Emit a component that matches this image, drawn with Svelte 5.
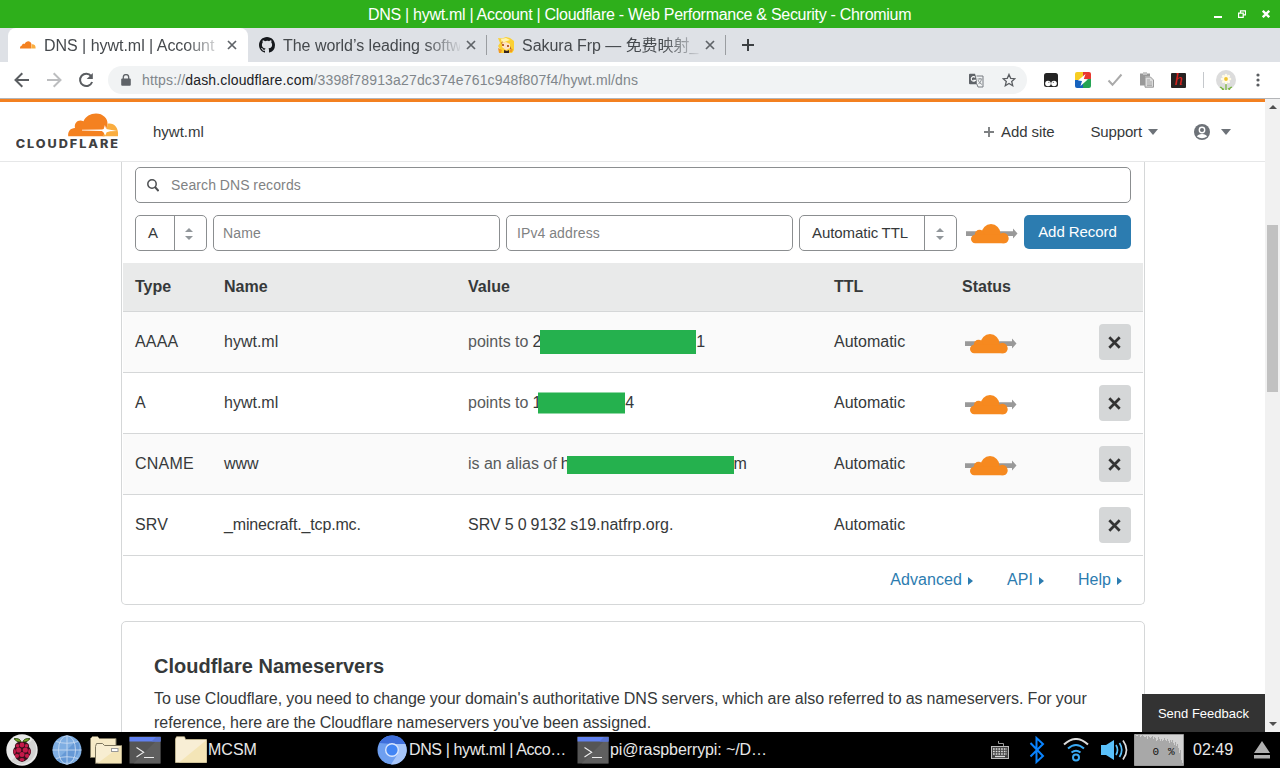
<script>
  const title = 'DNS | hywt.ml | Account | Cloudflare - Web Performance & Security - Chromium';
  const records = [
    { type: 'AAAA', name: 'hywt.ml', verb: 'points to', start: '2', end: '1', w: 156, h: 24, dy: 0, pull: -1, proxied: true },
    { type: 'A', name: 'hywt.ml', verb: 'points to', start: '1', end: '4', w: 87, h: 21, dy: -0.5, pull: -3, proxied: true },
    { type: 'CNAME', name: 'www', verb: 'is an alias of', start: 'h', end: 'm', w: 167, h: 18, dy: 1, pull: -3, proxied: true },
    { type: 'SRV', name: '_minecraft._tcp.mc.', full: 'SRV 5 0 9132 s19.natfrp.org.', proxied: false }
  ];
  const load = [31,29,29,30,30,28,29,30,29,28,28,29,26,29,28,27,28,29,26,28,27,24,25,28,26,24,26,24,25,27,25,24,26,24,22,25,23,25,22,20,23,19,21,17,12,15,5,2];
</script>

{#snippet proxyCloud()}
  <svg class="proxy" width="52" height="20" viewBox="0 0 52 20">
    <path d="M0 7.200h47V4.500l4.500 5-4.500 5V12H0z" fill="#999" />
    <g fill="#f6891f"><circle cx="25" cy="9.600" r="9.500" /><circle cx="13.500" cy="10.500" r="4.700" /><circle cx="37.300" cy="14" r="5.200" /><rect x="5" y="10.800" width="37.500" height="8.400" rx="4.200" /></g>
  </svg>
{/snippet}

{#snippet cross(size, color, weight)}
  <svg width={size} height={size} viewBox="0 0 10 10"><path d="M1 1l8 8M9 1L1 9" stroke={color} stroke-width={weight} fill="none" /></svg>
{/snippet}

{#snippet terminal()}
  <svg width="32" height="28" viewBox="0 0 32 28">
    <path d="M.5.5h31v27H.5z" fill="#555" />
    <path d="M31.5.5v27H4.5z" fill="#666" opacity=".6" />
    <path d="M.5 1h31v4.5H.5z" fill="#6181f0" /><path d="M27 1h4.5v4.5h-9z" fill="#5873d2" />
    <path d="M7.5 11.5l7.2 4.8-7.2 4.7M15 21.5h10" fill="none" stroke="#eee" stroke-width="1.1" />
  </svg>
{/snippet}

<div class="screen">
  <header class="titlebar">
    <span class="wtitle">{title}</span>
    <div class="controls">
      <svg width="8" height="8" viewBox="0 0 8 8"><path d="M0 6h8v2H0z" fill="#fff" /></svg>
      <svg width="8" height="8" viewBox="0 0 8 8"><path d="M2.500 2.500V.8h5v4H5.800M.6 3.200h4.600v4.200H.6z" fill="none" stroke="#fff" stroke-width="1.200" /></svg>
      <svg width="8" height="8" viewBox="0 0 8 8"><path d="M.8.8l6.400 6.400M7.200.8L.8 7.200" stroke="#fff" stroke-width="2.300" /></svg>
    </div>
  </header>

  <nav class="tabs">
    <div class="tab active">
      <svg width="16" height="8" viewBox="0 0 16 8"><path d="M0 7c0-1.8 1-2.500 2-2.600 0-1.500 1.600-2.200 2.600-1.400C6.300-.7 10.500-.5 11.500 3L11 7.500H0z" fill="#f48120" /><path d="M11.800 3.300C14 3 16 4.500 15.600 7.500h-4.500z" fill="#faad3f" /></svg>
      <span class="tlabel">DNS | hywt.ml | Account</span>
      {@render cross(10, '#5f6368', 1.7)}
    </div>
    <div class="tab">
      <svg width="16" height="16" viewBox="0 0 16 16"><path fill="#16191d" d="M8 0C3.58 0 0 3.58 0 8c0 3.54 2.29 6.53 5.47 7.59.4.07.55-.17.55-.38 0-.19-.01-.82-.01-1.49-2.01.37-2.53-.49-2.69-.94-.09-.23-.48-.94-.82-1.13-.28-.15-.68-.52-.01-.53.63-.01 1.08.58 1.23.82.72 1.21 1.87.87 2.33.66.07-.52.28-.87.51-1.07-1.78-.2-3.64-.89-3.64-3.95 0-.87.31-1.59.82-2.15-.08-.2-.36-1.02.08-2.12 0 0 .67-.21 2.2.82A7.6 7.6 0 0 1 8 3.86c.68 0 1.36.09 2 .27 1.53-1.04 2.2-.82 2.2-.82.44 1.1.16 1.92.08 2.12.51.56.82 1.27.82 2.15 0 3.07-1.87 3.75-3.65 3.95.29.25.54.73.54 1.48 0 1.07-.01 1.93-.01 2.2 0 .21.15.46.55.38A8.01 8.01 0 0 0 16 8c0-4.42-3.58-8-8-8z" /></svg>
      <span class="tlabel">The world’s leading softw</span>
      {@render cross(10, '#5f6368', 1.7)}
    </div>
    <i class="sep"></i>
    <div class="tab third">
      <svg width="16" height="16" viewBox="0 0 16 16"><path fill="#fbd034" d="M0 1l4 .5L8 0l4 1 4 3v9l-2 3H1l1-4-2-3 2-3z" /><path fill="#fff3b0" d="M3 2l5-1 4 2-3 1-5 2z" /><path fill="#fde3c4" d="M4 6l4-1 4 2v4l-4 2-4-3z" /><path fill="#b8622c" d="M4 7h2v2H4zM9 8h2v2H9zM5 4l-1 3-1-1zM12 9l2 4-2-1z" /><path fill="#35231f" d="M6 13l3 1 2-1v3H6z" /><path fill="#f29b20" d="M0 11l4 2-1 3H1zM12 13l3-1-1 3h-3z" /></svg>
      <span class="tlabel">Sakura Frp — 免费映射_</span>
      {@render cross(10, '#5f6368', 1.7)}
    </div>
    <i class="sep"></i>
    <svg class="plus" width="12" height="12" viewBox="0 0 12 12"><path d="M6 0v12M0 6h12" stroke="#3c4043" stroke-width="2" /></svg>
  </nav>

  <div class="toolbar">
    <svg class="b1" width="16" height="16" viewBox="0 0 16 16"><path d="M15 8H2M8.300 1.200L1.500 8l6.800 6.800" fill="none" stroke="#5a5d61" stroke-width="2" /></svg>
    <svg class="b2" width="16" height="16" viewBox="0 0 16 16"><path d="M1 8h13M7.700 1.200L14.500 8l-6.800 6.800" fill="none" stroke="#bcbdbf" stroke-width="2" /></svg>
    <svg class="b3" width="16" height="16" viewBox="0 0 16 16"><path d="M13.200 4.100A6.200 6.200 0 1 0 14.100 10" fill="none" stroke="#5a5d61" stroke-width="2" /><path d="M14.800 1v6H8.700z" fill="#5a5d61" /></svg>
    <div class="omnibox">
      <svg width="10" height="13" viewBox="0 0 10 13"><path d="M1.200 4.500h7.600q1 0 1 1v5.300q0 1-1 1H1.200q-1 0-1-1V5.500q0-1 1-1z" fill="#5f6368" /><path d="M2.300 5V3.300a2.700 2.700 0 0 1 5.400 0V5" fill="none" stroke="#5f6368" stroke-width="1.300" /></svg>
      <span class="url">https://<b>dash.cloudflare.com</b>/3398f78913a27dc374e761c948f807f4/hywt.ml/dns</span>
      <svg width="15" height="15" viewBox="0 0 15 15"><path d="M1 .8h5l3.500 10.500H1q-1 0-1-1V1.800q0-1 1-1z" fill="#5f6368" /><path d="M7.500 3H14v11H9l-1.200-3" fill="#f1f3f4" stroke="#777b80" /><path d="M6.200 4.300a2.300 2.300 0 1 0 .2 3H4.300" fill="none" stroke="#fff" stroke-width="1.100" /><path d="M8.500 6h4.800M11 5v1M9 7q1 3 4 4.500M12.500 6.500q-.8 3-3 4.500" fill="none" stroke="#777b80" stroke-width=".8" /></svg>
      <svg width="14" height="14" viewBox="0 0 14 14"><path d="M7 1.400l1.700 3.900 4.200.4-3.200 2.800 1 4.200L7 10.500l-3.700 2.200 1-4.200L1.100 5.700l4.200-.4z" fill="none" stroke="#5a5d61" stroke-width="1.300" /></svg>
    </div>
    <svg class="e1" width="14" height="14" viewBox="0 0 14 14"><rect width="14" height="14" rx="2.500" fill="#242424" /><circle cx="4" cy="10.500" r="2.800" fill="#fff" /><circle cx="10" cy="10.500" r="2.800" fill="#fff" /><circle cx="4.900" cy="9.300" r=".5" fill="#242424" /><circle cx="9.300" cy="9.300" r=".5" fill="#242424" /></svg>
    <svg class="e2" width="16" height="16" viewBox="0 0 16 16"><clipPath id="bolt-tile"><rect width="16" height="16" rx="2" /></clipPath><g clip-path="url(#bolt-tile)"><path d="M0 0h9v8H0z" fill="#f7cd22" /><path d="M8 0h8v8H8z" fill="#e9372f" /><path d="M0 8h8v8H0z" fill="#1763bd" /><path d="M8 7h8v9H8z" fill="#25a454" /></g><path d="M10.500 2L3 8.500l4 .5-1.500 5L13 7.300 8.800 7z" fill="#fff" /></svg>
    <svg class="e3" width="16" height="14" viewBox="0 0 16 14"><path d="M1.500 7.500l4 4.300L14.500 1.500" fill="none" stroke="#aaa" stroke-width="2" /></svg>
    <svg class="e4" width="15" height="16" viewBox="0 0 15 16"><path d="M0 1.500h3V.5h4v1h3v3H5v9H0z" fill="#999" /><path d="M3 1.500h4v1H3z" fill="#eee" /><path d="M5 5h5.500L13.500 8v7.200H5z" fill="#ddd" stroke="#999" /><path d="M7 8h3M7 10h5M7 12h5M7 13.600h5" stroke="#999" stroke-width=".8" /></svg>
    <span class="hext">h</span>
    <i class="tsep"></i>
    <svg class="avatar" width="20" height="20" viewBox="0 0 20 20"><circle cx="10" cy="10" r="10" fill="#dcdcdc" /><path d="M10 11v9M7 20l-2-3M13 20l2-3M4 17l4 2.500M16 17l-4 2" stroke="#79b43f" stroke-width="1.300" /><g stroke="#fffbe8" stroke-width="2.600" stroke-linecap="round"><path d="M10 5v8M6 9h8M7.200 6.200l5.600 5.600M12.800 6.200l-5.600 5.600" /></g><circle cx="10" cy="9" r="1.900" fill="#f0c330" /></svg>
    <svg class="dots" width="4" height="14" viewBox="0 0 4 14"><g fill="#5a5d61"><circle cx="2" cy="2" r="1.600" /><circle cx="2" cy="7" r="1.600" /><circle cx="2" cy="12" r="1.600" /></g></svg>
  </div>

  <div class="viewport">
    <main>
      <header class="site">
        <svg class="logo" width="104" height="38" viewBox="0 0 104 38">
          <path d="M52.200 24.200C51.700 19 54.500 16.300 59 16 57.800 10.500 62.500 6.800 67.500 9.200 69.500 4.500 74.500 1.600 80 1.600c7 0 12 5 11.500 10.600L88.500 24.200z" fill="#f48120" />
          <path d="M91.500 11.800C97.500 10.600 103 15 102 24.200H86.500L90.500 18z" fill="#faad3f" />
          <path d="M66 17.700l20-.2 1.700-.6 1.200-3.900 1.300 3.900 4 .9 7 1.200-7 .2-3.500 1-1.500 3.300-1.800-3.300-1.600-1.300L66 18.600z" fill="#fff" />
          <text transform="translate(-.3 35.700) scale(1.100 1)" textLength="93" lengthAdjust="spacing">CLOUDFLARE</text>
        </svg>
        <span class="domain">hywt.ml</span>
        <span class="add"><svg width="10" height="10" viewBox="0 0 10 10"><path d="M5 0v10M0 5h10" stroke="#7d8082" stroke-width="1.900" /></svg>Add site</span>
        <span class="support">Support<i class="caret"></i></span>
        <span class="user"><svg width="16" height="16" viewBox="0 0 16 16"><circle cx="8" cy="8" r="8" fill="#6d7278" /><circle cx="8" cy="6" r="3.400" fill="#fff" /><path d="M2.900 12.600Q4 9.900 8 9.900t5.100 2.700Q8 16 2.900 12.600z" fill="#fff" /><circle cx="8" cy="6" r="2" fill="#6d7278" /></svg><i class="caret"></i></span>
      </header>

      <div class="content">
        <section class="card records">
          <div class="search field">
            <svg width="12" height="13" viewBox="0 0 12 13"><circle cx="5" cy="5" r="4.200" fill="none" stroke="#4d4f52" stroke-width="1.500" /><path d="M8 8l3.600 4" stroke="#4d4f52" stroke-width="2" /></svg>
            <span>Search DNS records</span>
          </div>
          <div class="form">
            <div class="select type"><span>A</span><em><i></i><i></i></em></div>
            <div class="field name">Name</div>
            <div class="field ip">IPv4 address</div>
            <div class="select ttl"><span>Automatic TTL</span><em><i></i><i></i></em></div>
            <div class="pc">{@render proxyCloud()}</div>
            <button class="primary">Add Record</button>
          </div>
          <div class="table">
            <div class="row head"><span>Type</span><span>Name</span><span>Value</span><span>TTL</span><span>Status</span><span></span></div>
            {#each records as r}
              <div class="row">
                <span class="kind">{r.type}</span>
                <span class:tight={r.name.length > 10}>{r.name}</span>
                {#if r.full}
                  <span>{r.full}</span>
                {:else}
                  <span class="value"><small>{r.verb}</small>&nbsp;{r.start}<i class="mask" style="width:{r.w}px;height:{r.h}px;margin-left:{r.pull}px;transform:translateY({r.dy}px)"></i>{r.end}</span>
                {/if}
                <span>Automatic</span>
                <span class="status">{#if r.proxied}{@render proxyCloud()}{/if}</span>
                <button class="del" aria-label="Delete record">{@render cross(13, '#333', 2.1)}</button>
              </div>
            {/each}
          </div>
          <div class="links"><a href="#advanced">Advanced<i></i></a><a href="#api">API<i></i></a><a href="#help">Help<i></i></a></div>
        </section>

        <section class="card ns">
          <h2>Cloudflare Nameservers</h2>
          <p>To use Cloudflare, you need to change your domain's authoritative DNS servers, which are also referred to as nameservers. For your reference, here are the Cloudflare nameservers you've been assigned.</p>
        </section>
      </div>
    </main>
    <aside class="scroll"><i class="up"></i><i class="thumb"></i><i class="down"></i></aside>
    <button class="feedback">Send Feedback</button>
  </div>

  <footer class="taskbar">
    <svg class="k1" width="32" height="32" viewBox="0 0 32 32">
      <circle cx="16" cy="16" r="15.700" fill="#e9e9e9" /><path d="M27 5a15.700 15.700 0 0 1-22 22z" fill="#d3d3d3" />
      <path d="M15.500 8.500Q10 8 8 4.700q6-1 7.500 3.800zM16.500 8.500Q22 8 24 4.700q-6-1-7.500 3.800z" fill="#75a928" stroke="#29440e" stroke-width=".9" />
      <path d="M16 8q4-1 6.500 2 1 2 .5 3 3 3 1.500 7-2 3-3 5-2.500 2.500-5.500 3-3-.5-5.500-3-1-2-3-5Q6 16 9 13q-.5-1 .5-3Q12 7 16 8z" fill="#37101b" />
      <g fill="#c51a4a"><circle cx="16" cy="11" r="2.400" /><circle cx="11.500" cy="11.800" r="1.800" /><circle cx="20.500" cy="11.800" r="1.800" /><circle cx="12.700" cy="16" r="2.600" /><circle cx="19.300" cy="16" r="2.600" /><ellipse cx="8.700" cy="17.500" rx="1.200" ry="2.600" /><ellipse cx="23.300" cy="17.500" rx="1.200" ry="2.600" /><circle cx="16" cy="20.600" r="2.500" /><circle cx="11" cy="21.800" r="2.100" /><circle cx="21" cy="21.800" r="2.100" /><ellipse cx="16" cy="25.600" rx="2.500" ry="1.600" /></g>
    </svg>
    <svg class="k2" width="30" height="30" viewBox="0 0 30 30"><circle cx="15" cy="15" r="14.500" fill="#7faee2" /><path d="M25 5a14.500 14.500 0 0 1-20 20z" fill="#6699d6" /><g fill="none" stroke="#c5d9f2" stroke-width=".9"><ellipse cx="15" cy="15" rx="8.500" ry="14.300" /><path d="M15 .5v29M.5 15h29M4 6.500q11 3.500 22 0M4 23.500q11-3.500 22 0" /></g></svg>
    <svg class="k3" width="32" height="28" viewBox="0 0 32 28"><path d="M.5 21.500V2.500l2-2h5l2 2H26v19z" fill="#f6eac7" stroke="#7d765f" /><path d="M5.500 27.300V10.500l1-3h6l2 2h17v17.800z" fill="#f8eed2" stroke="#7d765f" /><path d="M31.500 9.500v17.800h-24z" fill="#f3e4b6" /><rect x="21.500" y="12.500" width="6.500" height="3" fill="#fff" stroke="#999" /></svg>
    <span class="k4">{@render terminal()}</span>
    <svg class="k5" width="32" height="28" viewBox="0 0 32 28"><path d="M.5 26.500V3l1-2.200h8l1 2.700h21v23z" fill="#f8eed5" /><path d="M31.500 4v22.500H4z" fill="#f4e5b7" /><path d="M.5 26.500V3l1-2.200h8l1 2.700h21v23z" fill="none" stroke="#dacb9e" stroke-width=".7" /></svg>
    <span class="t1">MCSM</span>
    <svg class="k6" width="30" height="30" viewBox="0 0 30 30"><circle cx="15" cy="15" r="14.500" fill="#6e9ff0" /><path d="M2.500 8A14.500 14.500 0 0 1 28.500 9H15z" fill="#3f6fdc" /><path d="M28.500 9A14.500 14.500 0 0 1 14 29.500L21 18.500Q23 13 15 9z" fill="#a6c5fa" /><circle cx="15" cy="15" r="7" fill="#dbe7fd" /><circle cx="15" cy="15" r="5.600" fill="#4285f4" /></svg>
    <span class="t2">DNS | hywt.ml | Acco…</span>
    <span class="k7">{@render terminal()}</span>
    <span class="t3">pi@raspberrypi: ~/D…</span>
    <svg class="r1" width="18" height="18" viewBox="0 0 18 18"><path d="M12.500 5V2.500h-5V0" fill="none" stroke="#999" /><rect x=".5" y="5.500" width="17" height="12" fill="#444" stroke="#bbb" /><path d="M2 8h14M2 10.500h14M2 13h14" stroke="#ddd" stroke-width="1.400" stroke-dasharray="1.700 1" /><path d="M4 15.500h10" stroke="#ddd" stroke-width="1.300" /></svg>
    <svg class="r2" width="16" height="28" viewBox="0 0 16 28"><path d="M1.500 7l12.500 13-6.500 6V2L14 8 1.500 20.500" fill="none" stroke="#0a84ff" stroke-width="2" /></svg>
    <svg class="r3" width="26" height="24" viewBox="0 0 26 24"><g fill="none" stroke-width="2"><path d="M1 6.500Q13-4.500 25 6.500" stroke="#ddd" /><path d="M5 10.500q8-7 16 0M8.500 14.500q4.500-3.500 9 0" stroke="#3aaaf4" /><circle cx="13" cy="19.500" r="3" stroke="#3aaaf4" /></g></svg>
    <svg class="r4" width="27" height="22" viewBox="0 0 27 22"><path d="M0 6h5l8-5v20l-8-5H0z" fill="#5ac1fa" /><g fill="none" stroke-width="1.700"><path d="M15 6q3 5 0 10M18.500 4q4.500 7 0 14" stroke="#5ac1fa" /><path d="M22 1.500q7 9.500 0 19" stroke="#ddd" /></g></svg>
    <svg class="r5" width="50" height="32" viewBox="0 0 50 32"><path d="M.5.500h49v31H.5z" fill="#d3d3d3" stroke="#9a9a9a" />{#each load as v, i}<rect x={i + 1} y={31 - v} width="1.050" height={v} fill="#a8a8a8" />{/each}<text x="18.500" y="21" textLength="22" xml:space="preserve">0 %</text></svg>
    <time>02:49</time>
    <svg class="r6" width="16" height="18" viewBox="0 0 16 18"><path d="M8 0l8 12H0zM0 14h16v3.500H0z" fill="#b0b0b0" /></svg>
  </footer>
</div>

<style>
  :global(body) { margin: 0; overflow: hidden; }
  * { box-sizing: border-box; }
  .screen { width: 1280px; height: 768px; display: flex; flex-direction: column; background: #fff; font-family: "Liberation Sans", "Noto Sans CJK SC", sans-serif; font-size: 16px; color: #36393a; overflow: hidden; }
  svg { display: block; flex: none; }
  button { border: 0; padding: 0; font: inherit; }
  span { white-space: nowrap; }
  .titlebar { height: 28px; flex: none; background: #2eaf1b; color: #fff; display: flex; align-items: center; padding-left: 368px; padding-top: 1px; }
  .wtitle { width: 550px; letter-spacing: -.29px; }
  .controls { margin: 0 10px 1px auto; display: flex; gap: 16px; }
  .tabs { height: 34px; flex: none; background: #dee1e6; display: flex; align-items: center; padding-left: 8px; color: #45494d; }
  .tab { width: 238px; height: 34px; display: flex; align-items: center; padding: 0 10px 0 11px; }
  .tab > :global(svg:last-child) { margin-left: 6px; }
  .active { width: 240px; background: #fff; border-radius: 8px 8px 0 0; padding-left: 12px; padding-right: 11px; }
  .tlabel { flex: 1; height: 24px; line-height: 26px; margin-left: 8px; overflow: hidden; letter-spacing: -.03px; mask-image: linear-gradient(90deg, #000 calc(100% - 36px), transparent calc(100% + 4px)); }
  .sep { width: 1px; height: 20px; background: #9a9da1; }
  .plus { margin-left: 16px; }
  .toolbar { height: 37px; flex: none; background: #fff; border-bottom: 1px solid #b3b5b8; display: flex; align-items: center; padding: 0 0 0 14px; }
  .b2 { margin-left: 16px; }
  .b3 { margin-left: 16px; }
  .omnibox { width: 919px; height: 28px; margin-left: 14px; border-radius: 14px; background: #f1f3f4; display: flex; align-items: center; padding: 0 11px 0 13px; }
  .url { flex: 1; margin-left: 11px; font-size: 14px; letter-spacing: .155px; color: #80868b; }
  .url b { font-weight: 400; color: #202124; }
  .omnibox > svg:last-child { margin-left: 18px; }
  .e1 { margin-left: 17px; }
  .e2 { margin-left: 17px; }
  .e3 { margin-left: 16px; }
  .e4 { margin-left: 17px; }
  .hext { width: 15px; height: 15px; margin-left: 16px; background: #252222; color: #e0201c; font: italic 17px/14px "Liberation Serif", serif; text-align: center; border-radius: 1px; }
  .tsep { width: 1px; height: 16px; margin-left: 17px; background: #c5c8cc; }
  .avatar { margin-left: 12px; }
  .dots { margin-left: 20px; }

  .viewport { flex: 1; min-height: 0; position: relative; display: flex; }
  main { width: 1265px; display: flex; flex-direction: column; overflow: hidden; border-top: 3px solid #f38020; }
  .site { height: 60px; flex: none; border-bottom: 1px solid #e6e7e8; display: flex; align-items: center; padding-left: 16px; font-size: 15px; }
  .logo { margin-top: -1px; }
  .logo text { font: 800 11.500px Inter, sans-serif; fill: #404041; }
  .domain { margin-left: 33px; }
  .add { margin-left: auto; display: flex; align-items: center; gap: 7px; letter-spacing: -.1px; }
  .support { margin-left: 36px; display: flex; align-items: center; gap: 6px; letter-spacing: -.15px; }
  .user { margin-left: 36px; margin-right: 34px; display: flex; align-items: center; gap: 11px; }
  .caret { border: 5.500px solid transparent; border-top: 6px solid #6d7278; border-bottom: 0; }
  .content { width: 1024px; margin-left: 121px; flex: 1; min-height: 0; word-spacing: -.38px; }
  .card { border: 1px solid #d5d7d8; border-radius: 5px; background: #fff; }
  .records { height: 443px; border-top: 0; border-radius: 0 0 5px 5px; padding: 5px 1px 0; }
  .field { height: 36px; border: 1px solid #8b8e90; border-radius: 5px; display: flex; align-items: center; font-size: 14px; letter-spacing: .13px; color: #7f8283; padding-left: 9px; }
  .search { margin: 0 12px; padding-left: 11px; gap: 12px; }
  .form { display: flex; margin: 12px 12px; gap: 6px; height: 36px; }
  .select { height: 36px; border: 1px solid #8b8e90; border-radius: 5px; display: flex; font-size: 15px; line-height: 34px; }
  .select > span { flex: 1; padding-left: 12px; letter-spacing: -.06px; }
  .select em { width: 32px; border-left: 1px solid #8b8e90; display: flex; flex-direction: column; align-items: center; justify-content: center; gap: 4px; padding-top: 1px; padding-right: 3px; }
  .ttl em { padding-right: 1px; }
  .select em i { border: 4px solid transparent; border-top: 0; border-bottom: 4px solid #92979b; }
  .select em i:last-child { border-bottom: 0; border-top: 4px solid #92979b; }
  .type { width: 72px; }
  .name, .ip { width: 287px; }
  .ip { padding-left: 10px; }
  .ttl { width: 158px; }
  .pc { width: 55px; padding: 9px 0 0 3px; }
  .primary { height: 34px; width: 107px; background: #2c7cb0; color: #fff; border-radius: 5px; font-size: 15px; letter-spacing: -.05px; padding-bottom: 1px; }
  .row { height: 61px; display: grid; grid-template-columns: 89px 244px 366px 128px 137px 32px; align-items: center; padding-left: 12px; border-bottom: 1px solid #d5d7d8; }
  .row > span { padding-bottom: 1px; }
  .row:nth-child(even) { background: #fafafa; }
  .head { height: 49px; font-weight: 700; background: #e9eaea; }
  .kind { letter-spacing: .2px; }
  .tight { letter-spacing: -.15px; }
  .value { display: flex; align-items: center; }
  .value small { font-size: 16px; color: #585b5c; word-spacing: -.1px; }
  .mask { background: #25b14e; position: relative; top: .5px; }
  .row .status { padding: 3px 0 0 3px; }
  .del { width: 32px; height: 36px; border-radius: 4px; background: #d5d7d8; display: grid; place-items: center; padding-right: 1px; }
  .links { height: 48px; display: flex; align-items: center; justify-content: flex-end; gap: 34px; padding-right: 21px; }
  .links a { color: #2c7cb0; text-decoration: none; display: flex; align-items: center; letter-spacing: .05px; }
  .links i { margin: 2px 0 0 6px; border: 4px solid transparent; border-left: 5px solid #2c7cb0; border-right: 0; }
  .ns { margin-top: 16px; height: 300px; padding: 32px 32px; }
  h2 { margin: 0; font-size: 20px; line-height: 24px; font-weight: 700; word-spacing: 0; }
  p { margin: 9px 0 0; line-height: 24px; width: 945px; }
  .scroll { width: 15px; background: #f1f1f1; display: flex; flex-direction: column; align-items: center; }
  .up { margin-top: 6px; border: 4px solid transparent; border-top: 0; border-bottom: 4px solid #505050; }
  .thumb { margin-top: 116px; width: 11px; height: 167px; background: #c1c1c1; }
  .down { margin: auto 0 6px; border: 4px solid transparent; border-bottom: 0; border-top: 4px solid #505050; }
  .feedback { position: absolute; right: 15px; bottom: 0; width: 123px; height: 38px; background: #333; color: #fff; font-size: 13px; }

  .taskbar { height: 36px; flex: none; background: #000; color: #e8e8e8; display: flex; align-items: center; padding-left: 6px; }
  .k2 { margin-left: 14px; }
  .k3 { margin-left: 8px; }
  .k4 { margin-left: 7px; }
  .k5 { margin-left: 14px; }
  .t1 { margin-left: 1px; width: 169px; }
  .t2 { margin-left: 2px; width: 168px; letter-spacing: -.38px; }
  .t3 { margin-left: 1px; width: 381px; letter-spacing: -.1px; }
  .r2 { margin-left: 20px; }
  .r3 { margin-left: 18px; }
  .r4 { margin-left: 12px; }
  .r5 { margin-left: 6px; }
  .r5 text { font: 11px "Liberation Mono", monospace; fill: #111; }
  time { margin-left: 9px; width: 41px; }
  .r6 { margin-left: 20px; }
</style>
